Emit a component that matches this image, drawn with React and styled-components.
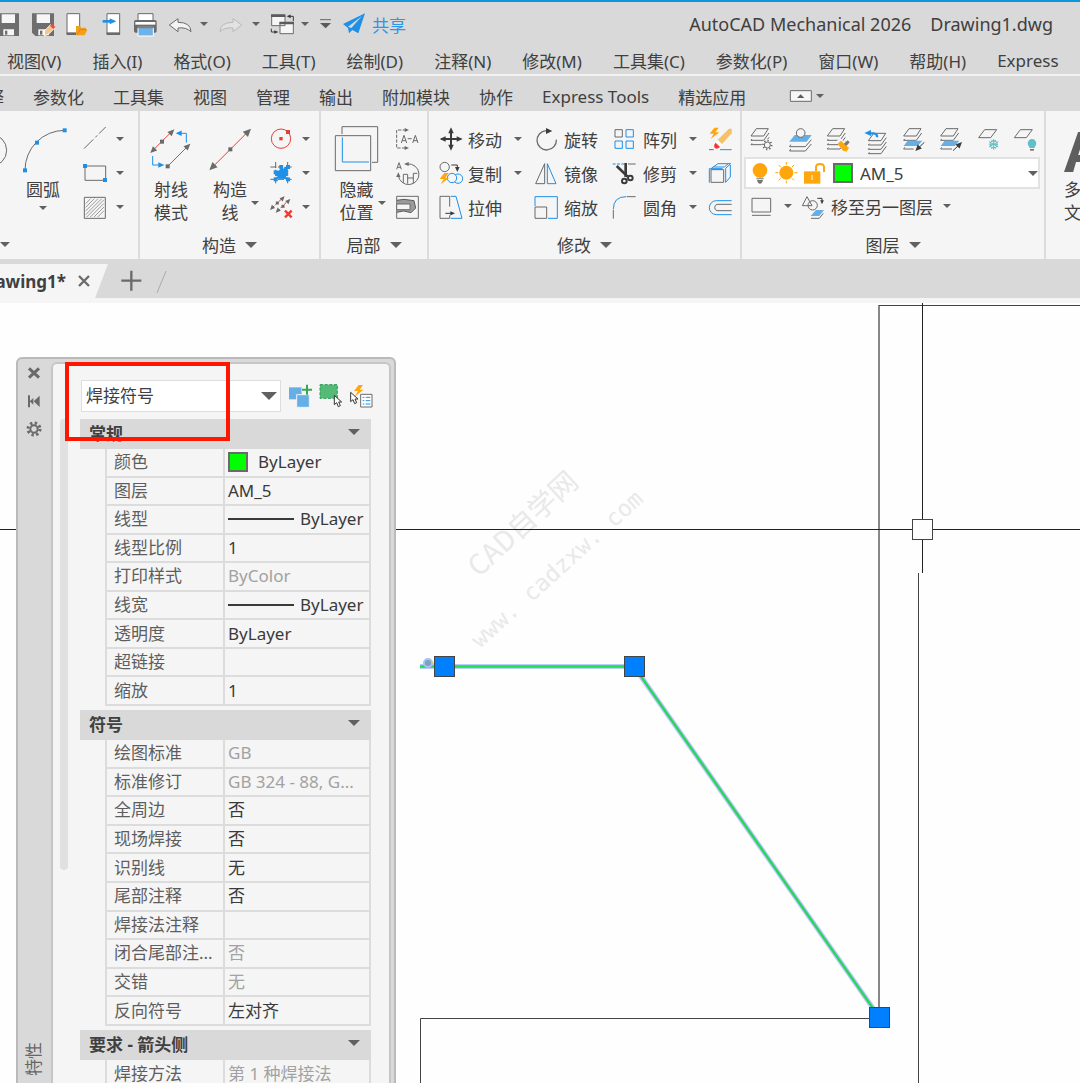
import React from "react";
import styled, { createGlobalStyle, css } from "styled-components";

const c = {
  chrome: "#d9d9d9",
  panel: "#f5f5f5",
  line: "#dcdcdc",
  text: "#404040",
  gray: "#6a6a6a",
  dark: "#3a3a3a",
  blue: "#1e90e8",
  sky: "#66aee6",
  red: "#ee3b32",
  orange: "#ffa60c",
  teal: "#62bfc6",
};

const Global = createGlobalStyle`
  * { box-sizing: border-box; }
  html, body { margin: 0; height: 100%; overflow: hidden; }
  #root { height: 100%; }
  body, button, select {
    font-family: "Noto Sans", "Noto Sans CJK SC", sans-serif;
    font-size: 17px;
    color: ${c.text};
  }
`;

const plain = css`
  appearance: none;
  border: 0;
  margin: 0;
  padding: 0;
  background: transparent;
  color: inherit;
  font: inherit;
`;

const Page = styled.div`
  display: flex;
  flex-direction: column;
  height: 100vh;
  overflow: hidden;
  background: ${c.chrome};
`;

const Svg = styled.svg`
  display: block;
  flex: none;
  overflow: visible;
  fill: none;
  stroke-width: 3;
`;

/* Drawings use three units per pixel; x and y give the corner of the view. */
const Glyph = ({ w = 24, h = 24, x, y, children }) => (
  <Svg width={w} height={h} viewBox={`${x} ${y} ${w * 3} ${h * 3}`} stroke={c.gray} aria-hidden="true">
    {children}
  </Svg>
);

const Sq = ({ x, y, f = c.blue, s = 12 }) => (
  <rect x={x - s / 2} y={y - s / 2} width={s} height={s} fill={f} stroke="none" />
);

const Head = ({ x, y, a = 0, s = 20, f = c.gray }) => (
  <path d={`M0 0L${-s} ${-s / 2.2}V${s / 2.2}z`} fill={f} stroke="none" transform={`translate(${x} ${y}) rotate(${a})`} />
);

const Triangle = styled.svg`
  display: block;
  flex: none;
  fill: #606060;
`;

const Caret = ({ w = 8 }) => (
  <Triangle width={w} height={w / 2} viewBox="0 0 8 4" aria-hidden="true">
    <path d="M0 0h8l-4 4z" />
  </Triangle>
);

/* ---------- title, menu and tab rows ---------- */

const TitleBar = styled.header`
  display: flex;
  align-items: center;
  gap: 11px;
  flex: none;
  height: 46px;
  padding-right: 27px;
  border-top: 2px solid #0d96d9;
  overflow: hidden;
`;

const Cut = styled.div`
  display: flex;
  flex: none;
  justify-content: flex-end;
  width: ${(p) => p.$w}px;
  white-space: nowrap;
  overflow: hidden;
`;

const IconButton = styled.button`
  ${plain}
  display: flex;
  align-items: center;
  gap: ${(p) => p.$gap || 9}px;
  flex: none;
`;

const ShareButton = styled(IconButton)`
  color: #2a97ea;
`;

const WindowTitle = styled.h1`
  display: flex;
  gap: 19px;
  margin: 0 0 0 auto;
  font-size: 18px;
  line-height: 20px;
  font-weight: 400;
  white-space: nowrap;
`;

const MenuBar = styled.nav`
  display: flex;
  align-items: center;
  gap: 31px;
  flex: none;
  height: 30px;
  padding-left: 7px;
  border-bottom: 2px solid #f2f2f2;
  overflow: hidden;
`;

const TabBar = styled.nav`
  display: flex;
  align-items: center;
  gap: 29px;
  flex: none;
  height: 35px;
  padding-top: 5px;
  overflow: hidden;
`;

const TextButton = styled.button`
  ${plain}
  flex: none;
  white-space: nowrap;
`;

const MinimizeGroup = styled.div`
  display: flex;
  align-items: center;
  gap: 4px;
  margin-left: 15px;
`;

/* ---------- ribbon ---------- */

const Ribbon = styled.section`
  display: flex;
  flex: none;
  height: 148px;
  background: ${c.panel};
  overflow: hidden;
`;

const Panel = styled.section`
  display: flex;
  flex-direction: column;
  flex: none;
  width: ${(p) => p.$w}px;
  border-right: 2px solid ${c.line};
  padding-top: 11px;
`;

const PanelBody = styled.div`
  display: flex;
  flex: none;
  height: 102px;
  padding-left: ${(p) => p.$left}px;
`;

const PanelTitle = styled.button`
  ${plain}
  display: flex;
  flex: 1;
  align-items: center;
  justify-content: ${(p) => p.$align || "center"};
  gap: 9px;
  padding-top: 6px;
`;

const BigButton = styled.button`
  ${plain}
  display: flex;
  flex: none;
  flex-direction: column;
  align-items: ${(p) => p.$align || "center"};
  gap: 5px;
  margin-left: ${(p) => p.$before || 0}px;
  padding-top: 5px;
  line-height: 23px;
  white-space: nowrap;
`;

const BigCaret = styled.button`
  ${plain}
  display: flex;
  flex: none;
  align-items: center;
  height: 24px;
  margin-top: 69px;
`;

const Stack = styled.div`
  display: grid;
  grid-auto-rows: 34px;
  align-items: center;
  margin-left: ${(p) => p.$before}px;
`;

const ToolGrid = styled.div`
  display: grid;
  grid-template-columns: 96px 79px 95px 24px;
  grid-auto-rows: 34px;
  align-items: center;
`;

const Tool = styled.div`
  display: flex;
  align-items: center;
  gap: ${(p) => p.$gap || 12}px;
`;

const LayerArea = styled.div`
  display: flex;
  flex-direction: column;
  flex: 1;
  padding-right: 4px;
`;

const LayerRow = styled.div`
  display: flex;
  align-items: center;
  gap: ${(p) => p.$gap}px;
  height: 34px;
  padding-left: 6px;
`;

const LayerCombo = styled.label`
  display: flex;
  align-items: center;
  height: 32px;
  margin-top: 1px;
  padding: 0 0 0 6px;
  gap: 6px;
  background: #fff;
  border: 2px solid #e2e2e2;
`;

const LayerValue = styled.span`
  display: flex;
  flex: 1;
  align-items: center;
  gap: 7px;
  margin-left: 2px;
`;

const Select = styled.select`
  ${plain}
  flex: 1;
  min-width: 0;
  outline: 0;
`;

const BigLetter = styled.span`
  font: 700 56px/46px "Open Sans", sans-serif;
  color: #5e5e5e;
`;

/* ---------- document tabs ---------- */

const DocBar = styled.nav`
  display: flex;
  align-items: stretch;
  gap: 13px;
  flex: none;
  height: 44px;
  padding-top: 5px;
  border-bottom: 5px solid ${c.panel};
`;

const DocTab = styled.div`
  display: flex;
  align-items: center;
  gap: 12px;
  width: 108px;
  background: ${c.panel};
  clip-path: polygon(0 0, 100% 0, 88% 100%, 0 100%);
  font-weight: 700;
`;

/* ---------- drawing area ---------- */

const Canvas = styled.main`
  position: relative;
  flex: 1;
  min-height: 0;
  background: #fefefe;
  overflow: hidden;
`;

const Sheet = styled.svg`
  display: block;
  width: 100%;
  height: 100%;
  fill: none;
`;

const WaterText = styled.text`
  fill: #e9e9e9;
  font-family: ${(p) => (p.$mono ? '"DejaVu Sans Mono", monospace' : '"Noto Sans CJK SC", sans-serif')};
  font-size: ${(p) => p.$size}px;
`;

/* ---------- properties palette ---------- */

const Palette = styled.aside`
  position: absolute;
  top: 54px;
  left: 16px;
  bottom: 0;
  display: flex;
  width: 380px;
  padding: 3px 3px 0 0;
  background: ${c.chrome};
  border: 2px solid #bababa;
  border-bottom: 0;
  border-radius: 6px 6px 0 0;
`;

const Rail = styled.div`
  display: flex;
  flex-direction: column;
  align-items: center;
  gap: 12px;
  flex: none;
  width: 33px;
  padding: 3px 2px 7px 0;
`;

const RailName = styled.span`
  margin-top: auto;
  writing-mode: vertical-rl;
  text-orientation: sideways;
  transform: rotate(180deg);
  line-height: 20px;
  color: #666;
`;

const PaletteBody = styled.div`
  display: flex;
  flex-direction: column;
  flex: 1;
  min-width: 0;
  padding: 16px 18px 0 7px;
  background: ${c.panel};
  border: 2px solid #c6c6c6;
  border-bottom: 0;
  border-radius: 6px 6px 0 0;
`;

const PickRow = styled.div`
  display: flex;
  align-items: center;
  gap: 7px;
  flex: none;
  padding-left: 21px;
`;

const TypeCombo = styled.label`
  display: flex;
  align-items: center;
  flex: none;
  width: 200px;
  height: 32px;
  padding: 0 3px 1px 4px;
  background: #fff;
  border: 1px solid #dedede;
`;

const Scroller = styled.div`
  display: flex;
  gap: 12px;
  flex: 1;
  min-height: 0;
  margin-top: 7px;
  overflow: hidden;
`;

const Thumb = styled.div`
  flex: none;
  width: 8px;
  height: 451px;
  background: #e0e0e0;
  border-radius: 4px;
`;

const Sections = styled.div`
  display: flex;
  flex-direction: column;
  gap: 4px;
  flex: 1;
`;

const SectionHead = styled.button`
  ${plain}
  display: flex;
  align-items: center;
  justify-content: space-between;
  width: 100%;
  height: 30px;
  padding: 0 11px 4px 9px;
  background: ${c.chrome};
  font-weight: 700;
`;

const Props = styled.table`
  width: calc(100% - 25px);
  height: ${(p) => Math.round(p.$rows * 28.6)}px;
  margin-left: 25px;
  table-layout: fixed;
  border-collapse: separate;
  border-spacing: 0;
  border-left: 2px solid ${c.line};
  line-height: 22px;
`;

const Name = styled.th`
  width: 118px;
  padding: 0 0 0 7px;
  border-right: 2px solid ${c.line};
  border-bottom: 2px solid ${c.line};
  color: #5e5e5e;
  font-weight: 400;
  text-align: left;
  white-space: nowrap;
`;

const Value = styled.td`
  padding: 0 0 0 3px;
  border-right: 2px solid ${c.line};
  border-bottom: 2px solid ${c.line};
  color: ${(p) => (p.$off ? "#a2a2a2" : c.dark)};
  white-space: nowrap;
`;

const Inline = styled.span`
  display: flex;
  align-items: center;
  gap: ${(p) => p.$gap}px;
`;

const Swatch = styled.span`
  flex: none;
  width: 20px;
  height: 20px;
  background: #00ff00;
  border: 2px solid #6a6a6a;
`;

const Stroke = styled.span`
  flex: none;
  width: 66px;
  height: ${(p) => p.$h}px;
  background: ${c.dark};
`;

const Mark = styled.div`
  position: absolute;
  top: 59px;
  left: 65px;
  width: 165px;
  height: 79px;
  border: 4px solid #ff1600;
  pointer-events: none;
`;

/* ---------- icons ---------- */

const Disk = ({ x, w = 24, children }) => (
  <Glyph x={x - 3} y={36} w={w}>
    <path d={`M${x} 40h66v68h-56l-10-10z`} fill="#6e6e6e" stroke="none" />
    <path d={`M${x + 14} 43h40v26h-40zM${x + 19} 88h32v18h-32z`} fill="#f6f6f6" stroke="none" />
    <path d={`M${x + 24} 92h7v12h-7z`} fill="#6e6e6e" stroke="none" />
    {children}
  </Glyph>
);

/* A pile of layers: one whole sheet and the front edges of those below. */
const Layers = ({ x, y = 66, n = 3 }) => (
  <g>
    <path d={`M${x} ${y + 18}L${x + 16} ${y - 4}H${x + 52}L${x + 38} ${y + 18}z`} />
    {Array.from({ length: n - 1 }, (_, i) => (
      <path
        key={i}
        d={`M${x + 3} ${y + 27 + i * 13}L${x} ${y + 31 + i * 13}H${x + 38}L${x + 54} ${y + 9 + i * 13}`}
      />
    ))}
  </g>
);

const Bolt = ({ x, y }) => (
  <path d={`M${x + 14} ${y}L${x} ${y + 18}h12l-9 16 26-20h-12l10-14z`} fill={c.orange} stroke="none" />
);

const Cursor = ({ x, y }) => (
  <path d={`M${x} ${y}v28l7-6 5 12 6-3-5-11h9z`} fill="#fff" stroke="#333" />
);

const CaretButton = ({ label }) => (
  <IconButton aria-label={label}>
    <Caret />
  </IconButton>
);

const ToolButton = ({ label, icon, more }) => (
  <Tool>
    <IconButton $gap={5}>
      {icon}
      {label}
    </IconButton>
    {more && <CaretButton label={`${label}选项`} />}
  </Tool>
);

const moveIcon = (
  <Glyph x={357} y={57}>
    <path d="M393 64v58M364 93h58" stroke={c.dark} strokeWidth="6" />
    <Head x={393} y={58} a={-90} s={18} f={c.dark} />
    <Head x={393} y={128} a={90} s={18} f={c.dark} />
    <Head x={359} y={93} a={180} s={18} f={c.dark} />
    <Head x={428} y={93} s={18} f={c.dark} />
  </Glyph>
);
const copyIcon = (
  <Glyph x={357} y={159}>
    <circle cx="374" cy="177" r="14" />
    <path d="M394 171h18v10" stroke={c.dark} />
    <Head x={412} y={192} a={90} s={15} f={c.dark} />
    <circle cx="414" cy="212" r="14" stroke={c.blue} />
    <circle cx="396" cy="210" r="14" stroke={c.blue} fill={c.panel} />
    <Bolt x={359} y={195} />
  </Glyph>
);
const stretchIcon = (
  <Glyph x={357} y={261}>
    <path d="M389 296v-31h-29v66h29v-9" />
    <path d="M392 265h16l18 66h-34" stroke={c.blue} />
    <path d="M376 316h20" stroke={c.dark} />
    <Head x={405} y={316} s={14} f={c.dark} />
  </Glyph>
);
const rotateIcon = (
  <Glyph x={45} y={57}>
    <path d="M78 68a29 29 0 1 0 31 27" strokeWidth="4" />
    <Head x={97} y={69} s={19} f={c.dark} />
  </Glyph>
);
const mirrorIcon = (
  <Glyph x={45} y={159}>
    <path d="M74 167v60H47z" />
    <path d="M82 167v60h26z" stroke={c.blue} />
  </Glyph>
);
const scaleIcon = (
  <Glyph x={45} y={261}>
    <path d="M45 294v-28h67v65H84" stroke={c.blue} />
    <path d="M45 297h35v34H45z" />
  </Glyph>
);
const arrayIcon = (
  <Glyph x={282} y={57}>
    <path d="M285 65h22v22h-22z" />
    <path d="M318 65h22v22h-22zM285 99h22v22h-22zM318 99h22v22h-22z" stroke={c.blue} />
  </Glyph>
);
const trimIcon = (
  <Glyph x={282} y={159}>
    <path d="M278 168h36" stroke={c.blue} strokeDasharray="9 4" />
    <path d="M324 168h23" />
    <path d="M290 174L323 206" stroke={c.dark} strokeWidth="8" />
    <path d="M317 165v42" stroke={c.dark} strokeWidth="8" />
    <circle cx="313" cy="219" r="7" stroke={c.dark} strokeWidth="6" />
    <circle cx="331" cy="210" r="7" stroke={c.dark} strokeWidth="6" />
  </Glyph>
);
const filletIcon = (
  <Glyph x={282} y={261}>
    <path d="M280 306v26M320 266h27" />
    <path d="M280 304q0-38 38-38" stroke={c.blue} />
  </Glyph>
);
const eraseIcon = (
  <Glyph x={567} y={57}>
    <Bolt x={569} y={59} />
    <path d="M592 97L627 62h8v14l-29 32z" fill="#f6c066" stroke="none" />
    <path d="M595 96l10 13-6 6-12-12z" fill="#fff" stroke="none" />
    <path d="M587 104l13 13q-12 10-17 1-3-8 4-14z" fill="#f03a30" stroke="none" />
    <path d="M567 125h14" />
    <path d="M600 125h35" stroke={c.blue} />
  </Glyph>
);
const explodeIcon = (
  <Glyph x={567} y={159}>
    <path d="M568 224v-42h40M574 181l20-14h38l-15 14v42l14-16v-36M581 177h32l12-10" stroke={c.blue} />
    <path d="M573 185h38v38h-38z" />
  </Glyph>
);
const offsetIcon = (
  <Glyph x={567} y={261}>
    <path d="M635 278h-46a21 21 0 0 0 0 42h46" stroke={c.blue} />
    <path d="M635 289h-44a10 10 0 0 0 0 19h44" />
  </Glyph>
);

const QuickAccess = () => (
  <>
    <Cut $w={20}>
      <IconButton aria-label="保存">
        <Disk x={-6} w={24} />
      </IconButton>
    </Cut>
    <IconButton aria-label="另存为">
      <Disk x={96}>
        <path d="M134 92l18-18 11 11-18 18-12 4z" fill="#f6c684" stroke="#fff" />
        <path d="M150 77l6-6 10 10-6 6z" fill="#ee4b40" stroke="none" />
      </Disk>
    </IconButton>
    <IconButton aria-label="打开">
      <Glyph x={198} y={36}>
        <path d="M201 41h38v62h-38z" fill="#fff" />
        <path d="M200 97h30v8h-30z" fill="#6a6a6a" stroke="none" />
        <path d="M228 78h12l4 5h14v6h4l-8 17h-26z" fill="#f5a01c" stroke="none" />
        <path d="M232 104l7-15h21" stroke="#c97a00" strokeWidth="2" />
      </Glyph>
    </IconButton>
    <IconButton aria-label="导入">
      <Glyph x={303} y={36} w={20}>
        <path d="M321 41h38v62h-38z" fill="#fff" />
        <path d="M320 97h40v8h-40z" fill="#6a6a6a" stroke="none" />
        <path d="M308 64h25" stroke={c.blue} strokeWidth="8" />
        <Head x={349} y={64} s={20} f={c.blue} />
      </Glyph>
    </IconButton>
    <IconButton aria-label="打印">
      <Glyph x={396} y={36}>
        <path d="M414 60v-19h45v19" fill="#fff" />
        <rect x="402" y="60" width="68" height="38" rx="5" fill="#6a6a6a" stroke="none" />
        <path d="M406 66h60v8h-60z" fill="#fff" stroke="none" />
        <path d="M414 82h46v26h-46z" fill="#6eb2e8" stroke="#fff" />
        <path d="M412 83h49" />
      </Glyph>
    </IconButton>
    <IconButton aria-label="放弃">
      <Glyph x={501} y={36}>
        <path d="M508 75L534 56v11q38 0 39 28-14-14-39-11v11z" fill="#f4f4f4" />
      </Glyph>
      <Caret />
    </IconButton>
    <IconButton aria-label="重做" disabled>
      <Glyph x={657} y={36}>
        <path d="M725 75L699 56v11q-38 0-39 28 14-14 39-11v11z" fill="#e2e2e2" stroke="#b9b9b9" />
      </Glyph>
      <Caret />
    </IconButton>
    <IconButton aria-label="切换窗口" $gap={6}>
      <Glyph x={813} y={36}>
        <path d="M815 46h40v31h-40zM840 69h40v32h-40z" fill="#f6f6f6" />
        <path d="M813 43h43v8h-43zM838 65h44v8h-44z" fill="#5b5b5b" stroke="none" />
        <path d="M866 49h14v14M814 86v10h12" stroke={c.dark} />
        <Head x={860} y={49} a={180} s={12} f={c.dark} />
        <Head x={835} y={96} s={12} f={c.dark} />
      </Glyph>
      <Caret />
    </IconButton>
    <IconButton aria-label="自定义">
      <Glyph x={963} y={36} w={12}>
        <path d="M963 59h33" />
        <path d="M963 69h33l-16 16z" fill="#5b5b5b" stroke="none" />
      </Glyph>
    </IconButton>
    <ShareButton $gap={5}>
      <Glyph x={1032} y={36}>
        <path d="M1032 72l66-32-20 60-18-10-10 10-3-16zM1047 80l42-32-32 36z" fill={c.blue} fillRule="evenodd" stroke="none" />
      </Glyph>
      共享
    </ShareButton>
  </>
);

const DrawPanel = () => (
  <Panel $w={140}>
    <PanelBody $left={0}>
      <Cut $w={23}>
        <BigButton aria-label="圆">
          <Glyph x={-69} y={57} w={46} h={46}>
            <circle cx="-28" cy="127" r="48" />
          </Glyph>
        </BigButton>
      </Cut>
      <BigButton>
        <Glyph x={69} y={57} w={40} h={46}>
          <path d="M75 187A119 119 0 0 1 194 67" />
          <Sq x={75} y={187} />
          <Sq x={111} y={104} />
          <Sq x={194} y={67} />
        </Glyph>
        圆弧
        <Caret />
      </BigButton>
      <Stack $before={20}>
        <Tool $gap={9}>
          <IconButton aria-label="直线">
            <Glyph x={249} y={57}>
              <path d="M252 122l28-28M286 88l6-6M297 77l20-20" />
            </Glyph>
          </IconButton>
          <CaretButton label="直线选项" />
        </Tool>
        <Tool $gap={9}>
          <IconButton aria-label="矩形">
            <Glyph x={249} y={159}>
              <path d="M255 174h62v43h-62z" />
              <Sq x={255} y={174} />
              <Sq x={315} y={216} />
            </Glyph>
          </IconButton>
          <CaretButton label="矩形选项" />
        </Tool>
        <Tool $gap={9}>
          <IconButton aria-label="图案填充">
            <Glyph x={249} y={264}>
              <path d="M253 271h63v63h-63z" />
              <path d="M257 290l15-15M257 301l26-26M257 312l37-37M257 323l48-48M260 330l52-52M271 330l41-41M282 330l30-30M293 330l19-19" strokeWidth="2" />
            </Glyph>
          </IconButton>
          <CaretButton label="图案填充选项" />
        </Tool>
      </Stack>
    </PanelBody>
    <PanelTitle $align="flex-start" aria-label="绘图">
      <Caret w={10} />
    </PanelTitle>
  </Panel>
);

const ConstructPanel = () => (
  <Panel $w={181}>
    <PanelBody $left={10}>
      <BigButton>
        <Glyph x={450} y={57} w={42} h={46}>
          <path d="M460 126l55-55M503 175l62-62" stroke={c.red} />
          <Head x={451} y={135} a={135} />
          <Head x={523} y={64} a={-45} />
          <Head x={571} y={107} a={-45} />
          <Sq x={486} y={101} f={c.gray} />
          <Sq x={503} y={175} f={c.gray} />
          <path d="M559 104V76h-16M458 144v27h20" stroke={c.blue} />
          <Head x={527} y={76} a={180} s={18} f={c.blue} />
          <Head x={493} y={171} s={18} f={c.blue} />
        </Glyph>
        <span>射线<br />模式</span>
      </BigButton>
      <BigButton $before={17}>
        <Glyph x={627} y={57} w={42} h={46}>
          <path d="M640 175L742 73" stroke={c.red} />
          <Head x={628} y={187} a={135} s={24} />
          <Head x={753} y={62} a={-45} s={24} />
          <Sq x={691} y={124} f={c.gray} />
        </Glyph>
        <span>构造<br />线</span>
      </BigButton>
      <BigCaret aria-label="构造线选项">
        <Caret />
      </BigCaret>
      <Stack $before={10}>
        <Tool $gap={9}>
          <IconButton aria-label="构造圆">
            <Glyph x={807} y={57}>
              <circle cx="843" cy="92" r="29" stroke={c.red} />
              <Sq x={843} y={92} f={c.red} s={10} />
              <Sq x={864} y={72} f={c.red} />
            </Glyph>
          </IconButton>
          <CaretButton label="构造圆选项" />
        </Tool>
        <Tool $gap={9}>
          <IconButton aria-label="自动构造">
            <Glyph x={807} y={159}>
              <path d="M827 162v66M811 177h69M811 214h69M863 162v66" strokeDasharray="18 5" />
              <path d="M826 212v-22q14 0 18-13h19v36z" fill={c.blue} stroke="none" />
              <Sq x={827} y={193} />
              <Sq x={827} y={214} />
              <Sq x={844} y={177} />
              <Sq x={864} y={177} />
              <Sq x={864} y={214} />
              <path d="M822 206h10M858 206h12M851 172v10" stroke={c.panel} />
            </Glyph>
          </IconButton>
          <CaretButton label="自动构造选项" />
        </Tool>
        <Tool $gap={9}>
          <IconButton aria-label="删除构造线">
            <Glyph x={807} y={261}>
              <path d="M816 300l34-32M832 310l34-34" stroke={c.red} strokeDasharray="10 4" />
              <Head x={810} y={306} a={135} s={15} />
              <Head x={854} y={265} a={-45} s={15} />
              <Head x={827} y={314} a={135} s={15} />
              <Head x={871} y={273} a={-45} s={15} />
              <Sq x={832} y={285} f={c.gray} s={9} />
              <Sq x={849} y={295} f={c.gray} s={9} />
              <path d="M855 308l20 20M875 308l-20 20" stroke={c.red} strokeWidth="7" />
            </Glyph>
          </IconButton>
          <CaretButton label="删除构造线选项" />
        </Tool>
      </Stack>
    </PanelBody>
    <PanelTitle>
      构造
      <Caret w={12} />
    </PanelTitle>
  </Panel>
);

const DetailPanel = () => (
  <Panel $w={108}>
    <PanelBody $left={14}>
      <BigButton>
        <Glyph x={45} y={57} w={43} h={46}>
          <path d="M66 78V56h107v107h-17M46 83h106v105H46z" />
          <path d="M67 88v74h80" stroke={c.blue} />
        </Glyph>
        <span>隐藏<br />位置</span>
      </BigButton>
      <BigCaret aria-label="隐藏位置选项">
        <Caret />
      </BigCaret>
      <Stack $before={10}>
        <IconButton aria-label="剖切线">
          <Glyph x={228} y={57}>
            <path d="M258 66h-28v54h28" strokeDasharray="10 4" />
            <Head x={267} y={66} s={13} />
            <Head x={267} y={120} s={13} />
            <path d="M244 105l8-23 8 23M247 98h11M263 92h12M278 105l8-23 8 23M281 98h11" />
          </Glyph>
        </IconButton>
        <IconButton aria-label="旋转视图">
          <Glyph x={228} y={159}>
            <path d="M230 184l7-20 7 20M233 178h9" />
            <path d="M262 168a31 31 0 1 1-27 34M250 224v-25h13v28M263 210h17M280 226v-30h12" />
            <Head x={252} y={168} a={180} s={14} />
            <Head x={235} y={193} a={-90} s={14} />
          </Glyph>
        </IconButton>
        <IconButton aria-label="局部剖视">
          <Glyph x={228} y={261}>
            <path d="M230 265h65v66h-65z" />
            <path d="M230 277l22-3 30 4 5 22-14 14-22-5-21 4" fill="#9a9a9a" stroke="#5b5b5b" />
            <path d="M230 288h40v17h-40z" fill={c.panel} />
          </Glyph>
        </IconButton>
      </Stack>
    </PanelBody>
    <PanelTitle>
      局部
      <Caret w={12} />
    </PanelTitle>
  </Panel>
);

const ModifyPanel = () => (
  <Panel $w={313}>
    <PanelBody $left={10}>
      <ToolGrid>
        <ToolButton label="移动" icon={moveIcon} more />
        <ToolButton label="旋转" icon={rotateIcon} />
        <ToolButton label="阵列" icon={arrayIcon} more />
        <IconButton aria-label="删除">{eraseIcon}</IconButton>
        <ToolButton label="复制" icon={copyIcon} more />
        <ToolButton label="镜像" icon={mirrorIcon} />
        <ToolButton label="修剪" icon={trimIcon} more />
        <IconButton aria-label="分解">{explodeIcon}</IconButton>
        <ToolButton label="拉伸" icon={stretchIcon} />
        <ToolButton label="缩放" icon={scaleIcon} />
        <ToolButton label="圆角" icon={filletIcon} more />
        <IconButton aria-label="偏移">{offsetIcon}</IconButton>
      </ToolGrid>
    </PanelBody>
    <PanelTitle>
      修改
      <Caret w={12} />
    </PanelTitle>
  </Panel>
);

const layerIcons = [
  ["图层特性", 45, (
    <>
      <Layers x={48} />
      <circle cx="97" cy="111" r="17" fill={c.panel} stroke="none" />
      <circle cx="97" cy="111" r="9" />
      <circle cx="97" cy="111" r="13" strokeDasharray="4 6" strokeWidth="5" />
    </>
  )],
  ["设为当前", 162, (
    <>
      <path d="M166 101l16-20h51l-15 20z" fill={c.sky} stroke="none" />
      <path d="M170 110l-3 6h47l18-21M170 123l-3 6h47l18-21" />
      <circle cx="200" cy="75" r="13" fill={c.panel} />
    </>
  )],
  ["匹配图层", 282, (
    <>
      <Layers x={286} n={4} />
      <path d="M313 100l11-10 25 22-9 17q-10 2-27-29z" fill={c.panel} stroke="none" />
      <path d="M317 107l10-9 24 22-8 11-10-3z" fill={c.orange} stroke="none" />
      <path d="M336 107l11-10 6 6-10 11z" fill="#777" stroke="none" />
    </>
  )],
  ["上一个图层", 387, (
    <>
      <Layers x={400} y={80} n={4} />
      <path d="M402 76h14q12 2 10 12" stroke={c.blue} strokeWidth="7" />
      <Head x={388} y={75} a={180} s={20} f={c.blue} />
    </>
  )],
  ["隔离图层", 504, (
    <>
      <Layers x={509} n={2} />
      <path d="M509 114l12-16h44l-14 16z" fill={c.sky} stroke="none" />
      <path d="M512 118l-3 5h30" />
      <path d="M571 103l-18 17" stroke={c.dark} />
      <Head x={544} y={129} a={135} s={19} f={c.dark} />
    </>
  )],
  ["取消隔离", 609, (
    <>
      <Layers x={611} n={2} />
      <path d="M611 114l12-16h44l-14 16z" fill={c.sky} stroke="none" />
      <path d="M614 118l-3 5h34" />
      <path d="M648 128l18-17" stroke={c.dark} />
      <Head x={675} y={102} a={-45} s={19} f={c.dark} />
    </>
  )],
  ["冻结图层", 729, (
    <>
      <path d="M731 89l18-24h36l-18 24z" />
      <path d="M776 93v32M762 101l28 16M762 117l28-16M769 96l7 6 7-6M769 122l7-6 7 6M763 109h26" stroke={c.teal} />
      <circle cx="776" cy="109" r="11" stroke={c.teal} />
    </>
  )],
  ["关闭图层", 840, (
    <>
      <path d="M835 89l18-24h36l-18 24z" />
      <path d="M888 93a13 13 0 0 1 8 23v4h-16v-4a13 13 0 0 1 8-23z" fill={c.teal} stroke="none" />
      <path d="M882 123h12v5h-12z" fill="#777" stroke="none" />
    </>
  )],
];

const LayerPanel = () => (
  <Panel $w={304}>
    <PanelBody $left={2}>
      <LayerArea>
        <LayerRow $gap={14}>
          {layerIcons.map(([name, x, art]) => (
            <IconButton key={name} aria-label={name}>
              <Glyph x={x} y={57}>{art}</Glyph>
            </IconButton>
          ))}
        </LayerRow>
        <LayerCombo>
          <Glyph x={54} y={159} w={17}>
            <circle cx="78" cy="187" r="22" fill={c.orange} stroke="none" />
            <path d="M67 211h22v3h-22zM69 216h18q-2 11-9 11t-9-11z" fill="#777" stroke="none" />
            <path d="M67 200h22v8h-22z" fill={c.orange} stroke="none" />
          </Glyph>
          <Glyph x={123} y={159} w={22}>
            <circle cx="157" cy="194" r="21" fill={c.orange} stroke="none" />
            <path d="M157 162v8M157 218v8M124 194h9M181 194h9M134 171l6 6M174 211l6 6M134 217l6-6M174 177l6-6" stroke={c.orange} />
          </Glyph>
          <Glyph x={204} y={159} w={22}>
            <path d="M207 190h49v37h-49z" fill={c.orange} stroke="none" />
            <path d="M243 190v-12q0-10 12-10t12 10v14" stroke={c.orange} strokeWidth="6" />
            <path d="M231 201v15" stroke="#fff" />
          </Glyph>
          <LayerValue>
            <Swatch />
            <Select aria-label="图层" defaultValue="AM_5">
              <option>AM_5</option>
            </Select>
          </LayerValue>
          <Caret w={10} />
        </LayerCombo>
        <LayerRow $gap={10}>
          <IconButton aria-label="图层状态">
            <Glyph x={45} y={261}>
              <path d="M51 274h56v41H51zM51 325h56" />
            </Glyph>
          </IconButton>
          <CaretButton label="图层状态选项" />
          <IconButton $gap={5}>
            <Glyph x={201} y={261}>
              <path d="M202 296l14-27 15 27z" />
              <circle cx="233" cy="295" r="14" />
              <path d="M247 274h14v9" stroke={c.dark} />
              <Head x={261} y={292} a={90} s={12} f={c.dark} />
              <path d="M227 327l16-18h24l-14 18z" fill={c.sky} stroke="none" />
              <path d="M228 334h25l12-15" />
            </Glyph>
            移至另一图层
          </IconButton>
          <CaretButton label="移至另一图层选项" />
        </LayerRow>
      </LayerArea>
    </PanelBody>
    <PanelTitle>
      图层
      <Caret w={12} />
    </PanelTitle>
  </Panel>
);

/* ---------- property data ---------- */

const line = (h) => (
  <Inline $gap={6}>
    <Stroke $h={h} />
    ByLayer
  </Inline>
);

const sections = [
  ["常规", [
    ["颜色", <Inline $gap={10}><Swatch />ByLayer</Inline>],
    ["图层", "AM_5"],
    ["线型", line(2)],
    ["线型比例", "1"],
    ["打印样式", "ByColor", true],
    ["线宽", line(2)],
    ["透明度", "ByLayer"],
    ["超链接", ""],
    ["缩放", "1"],
  ]],
  ["符号", [
    ["绘图标准", "GB", true],
    ["标准修订", "GB 324 - 88, G...", true],
    ["全周边", "否"],
    ["现场焊接", "否"],
    ["识别线", "无"],
    ["尾部注释", "否"],
    ["焊接法注释", ""],
    ["闭合尾部注...", "否", true],
    ["交错", "无", true],
    ["反向符号", "左对齐"],
  ]],
  ["要求 - 箭头侧", [["焊接方法", "第 1 种焊接法", true]]],
];

const PropertiesPalette = () => (
  <Palette>
    <Rail>
      <IconButton aria-label="关闭">
        <Glyph x={84} y={45} w={12} h={16}>
          <path d="M87 55l30 28M117 55l-30 28" strokeWidth="9" />
        </Glyph>
      </IconButton>
      <IconButton aria-label="自动隐藏">
        <Glyph x={84} y={129} w={12} h={16}>
          <path d="M87 136v36" strokeWidth="6" />
          <path d="M89 154l11-10v20zM101 154l18-17v34z" fill={c.gray} stroke="none" />
        </Glyph>
      </IconButton>
      <IconButton aria-label="设置">
        <Glyph x={84} y={213} w={12} h={16}>
          <circle cx="102" cy="237" r="11" strokeWidth="6" />
          <circle cx="102" cy="237" r="18" strokeWidth="9" strokeDasharray="7 7.13" />
        </Glyph>
      </IconButton>
      <RailName>特性</RailName>
    </Rail>
    <PaletteBody>
      <PickRow>
        <TypeCombo>
          <Select aria-label="对象类型" defaultValue="焊接符号">
            <option>焊接符号</option>
          </Select>
          <Caret w={16} />
        </TypeCombo>
        <IconButton aria-label="切换 PICKADD">
          <Glyph x={864} y={102}>
            <path d="M867 112h38v36h-38z" fill={c.sky} stroke="none" />
            <path d="M890 134h38v38h-38z" fill={c.sky} stroke={c.panel} />
            <path d="M921 102v32M905 119h31" stroke={c.panel} strokeWidth="12" />
            <path d="M921 104v30M906 119h30" stroke="#35a853" strokeWidth="6" />
          </Glyph>
        </IconButton>
        <IconButton aria-label="选择对象">
          <Glyph x={957} y={102}>
            <path d="M960 104h52v41h-52z" fill="#56ba77" stroke="#2f9a55" strokeDasharray="9 5" />
            <Cursor x={1003} y={136} />
          </Glyph>
        </IconButton>
        <IconButton aria-label="快速选择">
          <Glyph x={1050} y={102}>
            <Bolt x={1062} y={105} />
            <Cursor x={1052} y={127} />
            <path d="M1082 133h34v38h-34z" fill="#fff" />
            <path d="M1088 142h5M1088 152h5M1088 162h5M1097 142h14M1097 152h14M1097 162h14" stroke={c.blue} />
          </Glyph>
        </IconButton>
      </PickRow>
      <Scroller>
        <Thumb />
        <Sections>
          {sections.map(([title, rows]) => (
            <section key={title}>
              <SectionHead aria-expanded="true">
                {title}
                <Caret w={12} />
              </SectionHead>
              <Props $rows={rows.length}>
                <tbody>
                  {rows.map(([name, value, off]) => (
                    <tr key={name}>
                      <Name scope="row">{name}</Name>
                      <Value $off={off}>{value}</Value>
                    </tr>
                  ))}
                </tbody>
              </Props>
            </section>
          ))}
        </Sections>
      </Scroller>
    </PaletteBody>
  </Palette>
);

const Grip = ({ x, y }) => (
  <rect x={x - 10} y={y - 10} width="20" height="20" fill="#0080ff" stroke="#444" />
);

const leader = "M420 666.500H634L879.500 1017.500";

const Drawing = () => (
  <Sheet role="img" aria-label="图形">
    <g transform="translate(0 -303)">
      <g transform="translate(479 578) rotate(-43)">
        <WaterText $size={28}>CAD自学网</WaterText>
      </g>
      <g transform="translate(480 649) rotate(-42)">
        <WaterText $size={23} $mono>www. cadzxw. com</WaterText>
      </g>
      <path d="M879 305V1018" stroke="#888" strokeWidth="2" />
      <path d="M4000 305.500H879M918.500 573V3000M420.500 3000V1018.500H870" stroke="#444" />
      <path d="M0 529.500H4000M922.500 303V573" stroke="#222" />
      <rect x="912.5" y="519.5" width="20" height="20" fill="#fefefe" stroke="#444" />
      <path d={leader} stroke="#b5cdf8" strokeWidth="5" strokeLinejoin="round" />
      <path d={leader} stroke="#9ab4dc" strokeWidth="3" strokeLinejoin="round" />
      <path d={leader} stroke="#1fdc4a" strokeWidth="2" />
      <circle cx="428" cy="663" r="4" fill="#7f9fc4" stroke="#a5c4f5" strokeWidth="2" />
      <path d="M430 659l4 5" stroke="#e3c65a" />
      <Grip x={444.5} y={666.5} />
      <Grip x={634.5} y={666.5} />
      <Grip x={879.5} y={1017.5} />
    </g>
  </Sheet>
);

const menus = ["视图(V)", "插入(I)", "格式(O)", "工具(T)", "绘制(D)", "注释(N)", "修改(M)", "工具集(C)", "参数化(P)", "窗口(W)", "帮助(H)", "Express"];
const tabs = ["参数化", "工具集", "视图", "管理", "输出", "附加模块", "协作", "Express Tools", "精选应用"];

export default function App() {
  return (
    <Page>
      <Global />
      <TitleBar>
        <QuickAccess />
        <WindowTitle>
          <span>AutoCAD Mechanical 2026</span>
          <span>Drawing1.dwg</span>
        </WindowTitle>
      </TitleBar>
      <MenuBar>
        {menus.map((m) => (
          <TextButton key={m}>{m}</TextButton>
        ))}
      </MenuBar>
      <TabBar>
        <Cut $w={4}>
          <TextButton>注释</TextButton>
        </Cut>
        {tabs.map((t) => (
          <TextButton key={t}>{t}</TextButton>
        ))}
        <MinimizeGroup>
          <IconButton aria-label="最小化功能区">
            <Glyph x={273} y={276} w={22} h={12}>
              <path d="M274 278h63v32h-63z" fill="#f6f6f6" />
              <path d="M294 300h22l-11-11z" fill="#5b5b5b" stroke="none" />
            </Glyph>
          </IconButton>
          <CaretButton label="功能区选项" />
        </MinimizeGroup>
      </TabBar>
      <Ribbon>
        <DrawPanel />
        <ConstructPanel />
        <DetailPanel />
        <ModifyPanel />
        <LayerPanel />
        <Panel $w={120}>
          <PanelBody $left={18}>
            <BigButton $align="flex-start">
              <BigLetter>A</BigLetter>
              <span>多行<br />文字</span>
            </BigButton>
          </PanelBody>
        </Panel>
      </Ribbon>
      <DocBar>
        <DocTab>
          <Cut $w={66}>Drawing1*</Cut>
          <IconButton aria-label="关闭图形">
            <Glyph x={237} y={498} w={12} h={14}>
              <path d="M240 504l30 30M270 504l-30 30" strokeWidth="7" />
            </Glyph>
          </IconButton>
        </DocTab>
        <IconButton aria-label="新图形">
          <Glyph x={363} y={486} w={21} h={22}>
            <path d="M394 488v60M364 518h60" strokeWidth="7" />
          </Glyph>
        </IconButton>
        <Glyph x={465} y={465} w={12} h={34}>
          <path d="M471 552l27-66" stroke="#aaa" />
        </Glyph>
      </DocBar>
      <Canvas>
        <Drawing />
        <PropertiesPalette />
        <Mark />
      </Canvas>
    </Page>
  );
}
